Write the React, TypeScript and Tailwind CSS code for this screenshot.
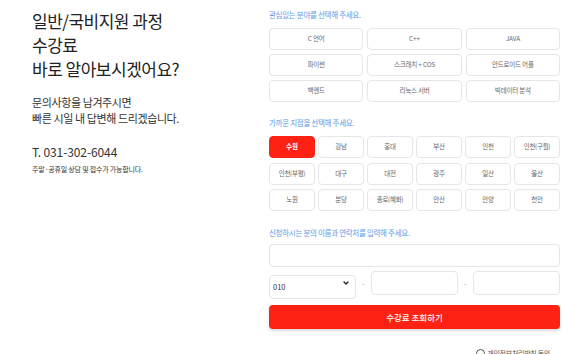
import { ChevronDown } from "lucide-react";

const courses = [
  "C 언어",
  "C++",
  "JAVA",
  "파이썬",
  "스크래치 + COS",
  "안드로이드 어플",
  "백엔드",
  "리눅스 서버",
  "빅데이터 분석",
];

const branches = [
  "수원",
  "강남",
  "홍대",
  "부산",
  "인천",
  "인천(구월)",
  "인천(부평)",
  "대구",
  "대전",
  "광주",
  "일산",
  "울산",
  "노원",
  "분당",
  "종로(혜화)",
  "안산",
  "안양",
  "천안",
];

const font = "font-['Noto_Sans_CJK_KR','Noto_Sans',sans-serif]";

function Label({ children }: { children: string }) {
  return (
    <p className="h-[10px] text-[7.5px] leading-[10px] tracking-[-0.3px] text-[#5b9be8]">
      {children}
    </p>
  );
}

export default function App() {
  const selected = "수원";

  return (
    <div className={`flex h-[354px] w-[580px] overflow-hidden bg-white ${font}`}>
      {/* Left intro */}
      <div className="w-[269px] shrink-0 pl-[32px] pt-[9px]">
        <h1 className="text-[17px] leading-[24px] font-normal tracking-[-0.5px] text-[#222]">
          일반/국비지원 과정
          <br />
          수강료
          <br />
          바로 알아보시겠어요?
        </h1>
        <p className="mt-[13px] text-[11px] leading-[16px] tracking-[-0.4px] text-[#333]">
          문의사항을 남겨주시면
          <br />
          빠른 시일 내 답변해 드리겠습니다.
        </p>
        <p className="mt-[18px] text-[12px] leading-[16px] tracking-[-0.1px] text-[#333]">
          T. 031-302-6044
        </p>
        <p className="mt-[4px] text-[7px] leading-[10px] tracking-[-0.2px] text-[#333]">
          주말·공휴일 상담 및 접수가 가능합니다.
        </p>
      </div>

      {/* Right form */}
      <div className="w-[291px] shrink-0 pt-[10px]">
        <Label>관심있는 분야를 선택해 주세요.</Label>
        <div className="mt-[8px] grid grid-cols-3 gap-x-[4px] gap-y-[4px]">
          {courses.map((c) => (
            <button
              key={c}
              className="flex h-[22px] items-center justify-center rounded-[4px] border border-[#e6e6e6] bg-white text-[6.5px] tracking-[-0.2px] text-[#666]"
            >
              {c}
            </button>
          ))}
        </div>

        <div className="mt-[16px]">
          <Label>가까운 지점을 선택해 주세요.</Label>
        </div>
        <div className="mt-[8px] grid grid-cols-6 gap-x-[3px] gap-y-[4.5px]">
          {branches.map((b) =>
            b === selected ? (
              <button
                key={b}
                className="flex h-[22px] items-center justify-center rounded-[4px] border border-[#ff2113] bg-[#ff2113] text-[6.5px] font-bold text-white"
              >
                {b}
              </button>
            ) : (
              <button
                key={b}
                className="flex h-[22px] items-center justify-center rounded-[4px] border border-[#e6e6e6] bg-white text-[6.5px] tracking-[-0.3px] text-[#666]"
              >
                {b}
              </button>
            )
          )}
        </div>

        <div className="mt-[17px]">
          <Label>신청하시는 분의 이름과 연락처를 입력해 주세요.</Label>
        </div>
        <input
          className="mt-[6px] block h-[23px] w-full rounded-[4px] border border-[#e6e6e6] px-2 text-[8px] outline-none"
          aria-label="이름"
        />

        <div className="mt-[4px] flex h-[24px] items-center">
          <div className="relative h-full w-[87px]">
            <select
              className="h-full w-full appearance-none rounded-[4px] border border-[#e6e6e6] bg-white pl-[3px] text-[7.5px] text-[#333] outline-none"
              defaultValue="010"
            >
              <option value="010">010</option>
              <option value="011">011</option>
              <option value="016">016</option>
            </select>
            <ChevronDown
              size={8}
              strokeWidth={4}
              className="pointer-events-none absolute right-[6px] top-1/2 -translate-y-1/2 text-[#222]"
            />
          </div>
          <span className="flex-1 text-center text-[7px] text-[#999]">-</span>
          <input
            className="h-full w-[87px] rounded-[4px] border border-[#e6e6e6] px-2 text-[8px] outline-none"
            aria-label="연락처 가운데"
          />
          <span className="flex-1 text-center text-[7px] text-[#999]">-</span>
          <input
            className="h-full w-[87px] rounded-[4px] border border-[#e6e6e6] px-2 text-[8px] outline-none"
            aria-label="연락처 끝"
          />
        </div>

        <button className="mt-[10px] flex h-[24px] w-full items-center justify-center rounded-[4px] bg-[#ff2113] text-[8.5px] font-medium text-white shadow-[0_2px_3px_rgba(0,0,0,0.15)]">
          수강료 조회하기
        </button>

        <div className="mt-[19px] flex items-center justify-end gap-[2px] pr-[10px]">
          <span className="h-[9px] w-[9px] rounded-full border border-[#555]" />
          <span className="text-[7px] leading-[10px] tracking-[-0.3px] text-[#555]">
            개인정보처리방침 동의
          </span>
        </div>
      </div>
    </div>
  );
}
